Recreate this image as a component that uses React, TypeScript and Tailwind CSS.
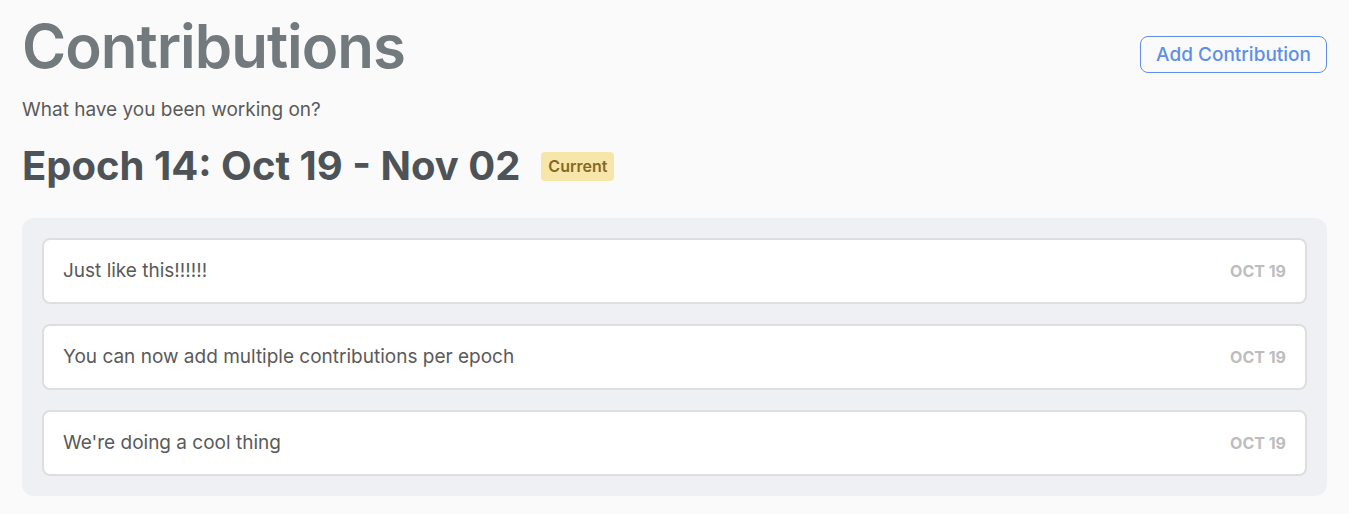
import React from "react";

const items = [
  "Just like this!!!!!!",
  "You can now add multiple contributions per epoch",
  "We're doing a cool thing",
];

export default function App() {
  return (
    <div
      className="min-h-[514px] bg-[#fafafa] px-[22px] pt-[10px] pb-[17px]"
      style={{ fontFamily: "Inter, 'Noto Sans', sans-serif" }}
    >
      <div className="flex items-start justify-between">
        <div>
          <h1 className="text-[60px] font-semibold leading-[72px] tracking-[-1px] text-[#737a7e]">
            Contributions
          </h1>
          <p className="mt-[15px] text-[19px] leading-[25px] text-[#5a5a5a]">
            What have you been working on?
          </p>
        </div>
        <button className="mt-[26px] flex h-[37px] items-center rounded-lg border border-[#5e8fe8] px-[15px] pt-[2px] text-[19px] font-medium text-[#5e8fe8]">
          Add Contribution
        </button>
      </div>
      <div className="mt-[20px] flex items-center gap-[21px]">
        <h2 className="text-[40px] font-bold leading-[48px] text-[#4d5356]">
          Epoch 14: Oct 19 - Nov 02
        </h2>
        <span className="rounded-[4px] bg-[#f6e6a9] px-[7px] py-[4px] text-[16px] font-semibold leading-[21px] text-[#86691f]">
          Current
        </span>
      </div>
      <div className="mt-[28px] flex flex-col gap-[20px] rounded-xl bg-[#eff0f4] p-[20px]">
        {items.map((t) => (
          <div
            key={t}
            className="flex h-[66px] items-center justify-between rounded-lg border-2 border-[#dedede] bg-white px-[19px]"
          >
            <span className="text-[19px] text-[#5a5a5a]">{t}</span>
            <span className="text-[16px] font-bold text-[#bdbdbd]">OCT 19</span>
          </div>
        ))}
      </div>
    </div>
  );
}
